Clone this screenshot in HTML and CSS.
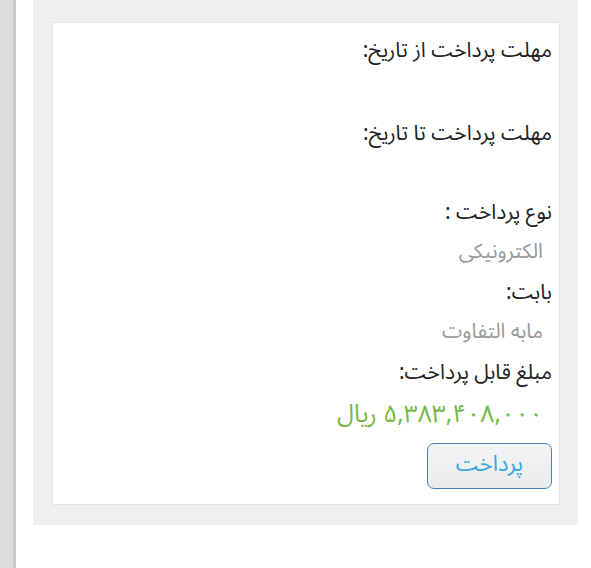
FILE: index.html
```html
<!DOCTYPE html>
<html lang="fa" dir="rtl">
<head>
<meta charset="utf-8">
<link rel="stylesheet" href="styles.css">
</head>
<body>
<div class="page">
  <div class="sidebar"></div>
  <div class="gutter"></div>
  <div class="panel">
    <div class="card">
      <div class="label first">مهلت پرداخت از تاریخ:</div>
      <div class="label second">مهلت پرداخت تا تاریخ:</div>
      <div class="label third">نوع پرداخت :</div>
      <div class="value">الکترونیکی</div>
      <div class="label">بابت:</div>
      <div class="value">مابه التفاوت</div>
      <div class="label">مبلغ قابل پرداخت:</div>
      <div class="amount">۵,۳۸۳,۴۰۸,۰۰۰ ریال</div>
      <div class="actions"><button class="pay">پرداخت</button></div>
    </div>
  </div>
</div>
</body>
</html>
```

FILE: styles.css
```css
html, body {
  margin: 0;
  padding: 0;
  background: #ffffff;
}
body {
  font-family: "Noto Sans Arabic", "Vazirmatn", "DejaVu Sans", sans-serif;
  width: 591px;
  height: 568px;
  overflow: hidden;
}
.page {
  display: flex;
  align-items: flex-start;
  height: 568px;
  direction: ltr;
}
.sidebar {
  width: 13px;
  height: 568px;
  background: #dcdcdc;
  border-right: 3px solid #c9c9c9;
}
.gutter {
  width: 17px;
  height: 568px;
}
.panel {
  width: 545px;
  height: 525px;
  box-sizing: border-box;
  background: #efefef;
  padding: 22px 18px 20px 19px;
}
.card {
  direction: rtl;
  box-sizing: border-box;
  height: 483px;
  background: #ffffff;
  border: 1px solid #e3e3e3;
  padding: 10px 7px 0 7px;
  display: flex;
  flex-direction: column;
  align-items: stretch;
}
.label {
  font-size: 21px;
  line-height: 34px;
  color: #222222;
  margin-top: 6px;
}
.first { margin-top: 0; }
.second { margin-top: 49px; }
.third { margin-top: 45px; }
.value {
  font-size: 20.5px;
  line-height: 34px;
  color: #999999;
  padding-right: 9px;
  margin-top: 6px;
}
.amount {
  font-size: 24.5px;
  line-height: 34px;
  color: #76b947;
  padding-right: 9px;
  margin-top: 8px;
}
.actions {
  margin-top: 12px;
  display: flex;
}
.pay {
  width: 125px;
  height: 46px;
  box-sizing: border-box;
  border: 1.5px solid #4a80b3;
  border-radius: 7px;
  background: linear-gradient(#f3f4f5, #e9ebed);
  color: #3aa6de;
  font-family: inherit;
  font-size: 22px;
  line-height: 30px;
  padding: 0 0 4px 0;
}
```
